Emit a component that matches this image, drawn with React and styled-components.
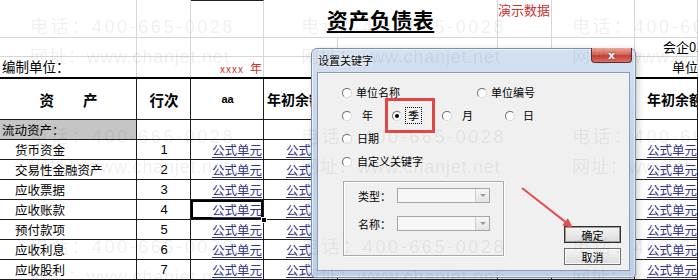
import React from 'react';
import styled, { createGlobalStyle, css } from 'styled-components';

const GlobalStyle = createGlobalStyle`
  html, body {
    margin: 0;
    padding: 0;
    background: #fff;
  }
  * {
    box-sizing: border-box;
  }
`;

const COLS = '137px 54px 73px 74px 160px 54px 83px 63px';
const CJK = "'Noto Sans CJK SC', 'Liberation Sans', sans-serif";

const sheetRows = [
  { name: '货币资金', no: 1 },
  { name: '交易性金融资产', no: 2 },
  { name: '应收票据', no: 3 },
  { name: '应收账款', no: 4, selected: true },
  { name: '预付款项', no: 5 },
  { name: '应收利息', no: 6 },
  { name: '应收股利', no: 7 },
];

const Page = styled.div`
  position: relative;
  width: 698px;
  height: 280px;
  overflow: hidden;
  background: #fff;
  font-family: ${CJK};
  color: #000;
`;

/* ---------- sheet ---------- */

const TopArea = styled.div`
  display: grid;
  grid-template-columns: ${COLS};
  grid-template-rows: 38px 19px 20px;
`;

const TopCell = styled.div`
  display: flex;
  align-items: ${(p) => p.$valign || 'center'};
  justify-content: ${(p) => p.$align || 'flex-start'};
  padding: ${(p) => p.$pad || '0'};
  grid-column: ${(p) => p.$span || 'auto'};
  border-right: 1px solid #d6d6d6;
  border-bottom: ${(p) => (p.$last ? 'none' : '1px solid #d6d6d6')};
  border-top: ${(p) => (p.$topLine ? '1px solid #222' : 'none')};
  font-size: 13px;
  white-space: nowrap;
  overflow: visible;
`;

const Title = styled.span`
  font-size: 21px;
  font-weight: 700;
  text-decoration: underline;
  text-underline-offset: 3px;
  letter-spacing: 0.5px;
`;

const RedNote = styled.span`
  color: #cf2e2e;
  font-size: ${(p) => p.$size || 13}px;
  letter-spacing: ${(p) => p.$spacing || 0}px;
  margin-left: ${(p) => p.$ml || 0}px;
`;

const Row = styled.div`
  display: grid;
  grid-template-columns: ${COLS};
  height: ${(p) => p.$h}px;
  border-top: ${(p) => (p.$thick ? '2px solid #000' : 'none')};
  border-bottom: 1px solid #1c1c1c;
`;

const Cell = styled.div`
  position: relative;
  display: flex;
  align-items: center;
  justify-content: ${(p) =>
    p.$align === 'center' ? 'center' : p.$align === 'right' ? 'flex-end' : 'flex-start'};
  padding: 0 ${(p) => p.$pr ?? 1}px 0 ${(p) => p.$pl ?? 2}px;
  border-right: 1px solid #1c1c1c;
  background: ${(p) => (p.$gray ? '#c5c5c5' : 'transparent')};
  font-size: ${(p) => p.$size || 12.5}px;
  font-weight: ${(p) => (p.$bold ? 700 : 400)};
  font-family: ${(p) => (p.$latin ? "'Liberation Sans', sans-serif" : CJK)};
  white-space: nowrap;
  overflow: hidden;
  ${(p) =>
    p.$selected &&
    css`
      overflow: visible;
      z-index: 1;
      box-shadow: inset 0 0 0 2px #000;
    `}
`;

const FillHandle = styled.span`
  position: absolute;
  right: -4px;
  bottom: -4px;
  width: 6px;
  height: 6px;
  background: #000;
  border: 1px solid #fff;
`;

const Formula = styled.span`
  color: #34348c;
  text-decoration: underline;
  text-underline-offset: 2px;
`;

/* ---------- dialog ---------- */

const Dialog = styled.div`
  position: absolute;
  left: 311px;
  top: 48px;
  width: 325px;
  height: 230px;
  display: flex;
  flex-direction: column;
  border: 1px solid #7d91ab;
  border-radius: 6px 6px 4px 4px;
  background: linear-gradient(180deg, #d3e1f2 0%, #c3d5ec 40%, #bcd0e8 100%);
  box-shadow: inset 0 0 0 1px rgba(255, 255, 255, 0.6), 2px 2px 6px rgba(0, 0, 0, 0.2);
`;

const TitleBar = styled.div`
  height: 23px;
  display: flex;
  align-items: flex-start;
  justify-content: space-between;
  padding-left: 6px;
`;

const TitleText = styled.span`
  margin-top: 5px;
  font-size: 11px;
  line-height: 13px;
  text-shadow: 0 0 4px #fff, 0 0 2px #fff;
`;

const CloseButton = styled.div`
  width: 41px;
  height: 15px;
  margin-right: 3px;
  margin-top: -1px;
  display: flex;
  align-items: center;
  justify-content: center;
  border: 1px solid #6b2a2a;
  border-top: none;
  border-radius: 0 0 4px 4px;
  background: linear-gradient(180deg, #e9a89a 0%, #d46a5c 45%, #c2403a 55%, #d9735f 100%);
  color: #fff;
  font-family: 'DejaVu Sans', sans-serif;
  font-size: 11px;
  font-weight: 700;
  text-shadow: 0 0 2px #7a1d1d;
`;

const Client = styled.div`
  flex: 1;
  margin: 0 5px 6px 5px;
  border: 1px solid #8c9db3;
  background: #f0f0f0;
  display: grid;
  grid-template-columns: 1fr auto;
  padding: 8px 8px 5px 0;
  font-size: 11px;
`;

const Options = styled.div`
  display: flex;
  flex-direction: column;
`;

const RadioRow = styled.div`
  height: 23px;
  display: grid;
  grid-template-columns: ${(p) => p.$cols || 'auto'};
  align-items: center;
  padding-left: 24px;
`;

const RadioItem = styled.label`
  display: flex;
  align-items: center;
  gap: ${(p) => p.$gap ?? 4}px;
  line-height: 13px;
`;

const RadioDot = styled.span`
  position: relative;
  flex: none;
  width: 10px;
  height: 10px;
  border-radius: 50%;
  border: 1px solid;
  border-color: #6e6e6e #d8d8d8 #d8d8d8 #6e6e6e;
  background: #fff;
  ${(p) =>
    p.$checked &&
    css`
      &::after {
        content: '';
        position: absolute;
        left: 2px;
        top: 2px;
        width: 4px;
        height: 4px;
        border-radius: 50%;
        background: #000;
      }
    `}
`;

const Focus = styled.span`
  padding: 1px 2px;
  outline: 1px dotted #000;
`;

const GroupBox = styled.div`
  width: 161px;
  height: 75px;
  margin: 8px 0 0 25px;
  padding: 6px 0 0 14px;
  display: flex;
  flex-direction: column;
  gap: 13px;
  border: 1px solid #a9a9a9;
  box-shadow: 1px 1px 0 #fff, inset 1px 1px 0 #fff;
`;

const Field = styled.div`
  display: flex;
  align-items: center;
  height: 15px;
`;

const FieldLabel = styled.span`
  width: 39px;
`;

const Combo = styled.div`
  width: 93px;
  height: 15px;
  display: flex;
  justify-content: flex-end;
  border: 1px solid #a6a6a6;
  background: #f7f7f7;
`;

const ComboArrow = styled.div`
  width: 14px;
  height: 13px;
  display: flex;
  align-items: center;
  justify-content: center;
  border-left: 1px solid #cfcfcf;
  background: linear-gradient(180deg, #f6f6f6, #e4e4e4);
  &::after {
    content: '';
    border-left: 3px solid transparent;
    border-right: 3px solid transparent;
    border-top: 3px solid #9a9a9a;
  }
`;

const Buttons = styled.div`
  align-self: end;
  display: flex;
  flex-direction: column;
  gap: 5px;
`;

const Button = styled.div`
  width: 57px;
  height: 17px;
  display: flex;
  align-items: center;
  justify-content: center;
  font-size: 11px;
  border: 1px solid ${(p) => (p.$default ? '#2f2f2f' : '#707070')};
  box-shadow: ${(p) => (p.$default ? 'inset 0 0 0 1px #9c9c9c' : 'inset 0 0 0 1px #fafafa')};
  background: linear-gradient(180deg, #f4f4f4 0%, #e8e8e8 50%, #dcdcdc 100%);
`;

/* ---------- overlays ---------- */

const Watermark = styled.div`
  position: absolute;
  inset: 0;
  pointer-events: none;
  display: grid;
  grid-template-columns: repeat(3, 271px);
  grid-auto-rows: 110px;
  padding: 12px 0 0 30px;
  color: rgba(0, 0, 0, 0.075);
  font-family: 'Liberation Sans', 'Noto Sans CJK SC', sans-serif;
  font-size: 18px;
  white-space: nowrap;
`;

const MarkLine = styled.div`
  height: 30px;
  line-height: 30px;
  letter-spacing: ${(p) => p.$spacing}px;
`;

const Annotation = styled.svg`
  position: absolute;
  left: 0;
  top: 0;
  pointer-events: none;
`;

const Radio = ({ label, checked, gap, focus }) => (
  <RadioItem $gap={gap}>
    <RadioDot $checked={checked} />
    {focus ? <Focus>{label}</Focus> : <span>{label}</span>}
  </RadioItem>
);

const App = () => {
  return (
    <Page>
      <GlobalStyle />

      <TopArea>
        <TopCell />
        <TopCell />
        <TopCell $topLine />
        <TopCell $span="4 / 6" $align="center">
          <Title>资产负债表</Title>
        </TopCell>
        <TopCell $valign="flex-start">
          <RedNote>演示数据</RedNote>
        </TopCell>
        <TopCell />
        <TopCell />

        <TopCell />
        <TopCell />
        <TopCell />
        <TopCell />
        <TopCell />
        <TopCell />
        <TopCell />
        <TopCell $valign="flex-end" $pad="0 0 0 28px">
          会企01表
        </TopCell>

        <TopCell $last $valign="flex-end" $pad="0 0 1px 2px">
          <span style={{ fontSize: 13.5 }}>编制单位：</span>
        </TopCell>
        <TopCell $last />
        <TopCell $last $valign="flex-end" $align="flex-end" $pad="0 1px 1px 0">
          <RedNote $size={10} $spacing={1}>xxxx</RedNote>
          <RedNote $size={12} $ml={6}>年</RedNote>
        </TopCell>
        <TopCell $last />
        <TopCell $last />
        <TopCell $last />
        <TopCell $last />
        <TopCell $last $valign="flex-end" $pad="0 0 1px 37px">
          单位
        </TopCell>
      </TopArea>

      <Row $h={43} $thick>
        <Cell $align="center" $bold $size={14.5}>
          资　　产
        </Cell>
        <Cell $align="center" $bold $size={14.5}>
          行次
        </Cell>
        <Cell $align="center" $bold $size={11} $latin>
          aa
        </Cell>
        <Cell $bold $size={14} $pl={3}>
          年初余额
        </Cell>
        <Cell />
        <Cell />
        <Cell />
        <Cell $bold $size={14} $pl={12}>
          年初余额
        </Cell>
      </Row>

      <Row $h={20}>
        <Cell $gray $size={12.5}>
          流动资产：
        </Cell>
        <Cell />
        <Cell />
        <Cell />
        <Cell />
        <Cell />
        <Cell />
        <Cell />
      </Row>

      {sheetRows.map((r) => (
        <Row key={r.no} $h={20}>
          <Cell $pl={15}>{r.name}</Cell>
          <Cell $align="center" $latin $size={13}>
            {r.no}
          </Cell>
          <Cell $align="right" $selected={r.selected}>
            <Formula>公式单元</Formula>
            {r.selected && <FillHandle />}
          </Cell>
          <Cell $align="right">
            <Formula>公式单元</Formula>
          </Cell>
          <Cell />
          <Cell />
          <Cell />
          <Cell $pl={12}>
            <Formula>公式单元</Formula>
          </Cell>
        </Row>
      ))}

      <Dialog>
        <TitleBar>
          <TitleText>设置关键字</TitleText>
          <CloseButton>x</CloseButton>
        </TitleBar>
        <Client>
          <Options>
            <RadioRow $cols="135px auto">
              <Radio label="单位名称" />
              <Radio label="单位编号" />
            </RadioRow>
            <RadioRow $cols="50px 50px 63px auto">
              <Radio label="年" gap={10} />
              <Radio label="季" checked focus gap={4} />
              <Radio label="月" gap={10} />
              <Radio label="日" gap={8} />
            </RadioRow>
            <RadioRow>
              <Radio label="日期" gap={5} />
            </RadioRow>
            <RadioRow>
              <Radio label="自定义关键字" gap={5} />
            </RadioRow>
            <GroupBox>
              <Field>
                <FieldLabel>类型：</FieldLabel>
                <Combo>
                  <ComboArrow />
                </Combo>
              </Field>
              <Field>
                <FieldLabel>名称：</FieldLabel>
                <Combo>
                  <ComboArrow />
                </Combo>
              </Field>
            </GroupBox>
          </Options>
          <Buttons>
            <Button $default>确定</Button>
            <Button>取消</Button>
          </Buttons>
        </Client>
      </Dialog>

      <Watermark>
        {Array.from({ length: 9 }).map((_, i) => (
          <div key={i}>
            <MarkLine $spacing={2.6}>电话：400-665-0028</MarkLine>
            <MarkLine $spacing={0.8}>网址：www.chanjet.net</MarkLine>
          </div>
        ))}
      </Watermark>

      <Annotation width="698" height="280" viewBox="0 0 698 280">
        <rect x="386.5" y="99.5" width="47" height="32" fill="none" stroke="#e04646" strokeWidth="3" />
        <line x1="522" y1="188" x2="566" y2="222.4" stroke="#e05050" strokeWidth="2" />
        <polygon points="573,228 562.3,225.3 567.9,218.2" fill="#e05050" />
      </Annotation>
    </Page>
  );
};

export default App;
